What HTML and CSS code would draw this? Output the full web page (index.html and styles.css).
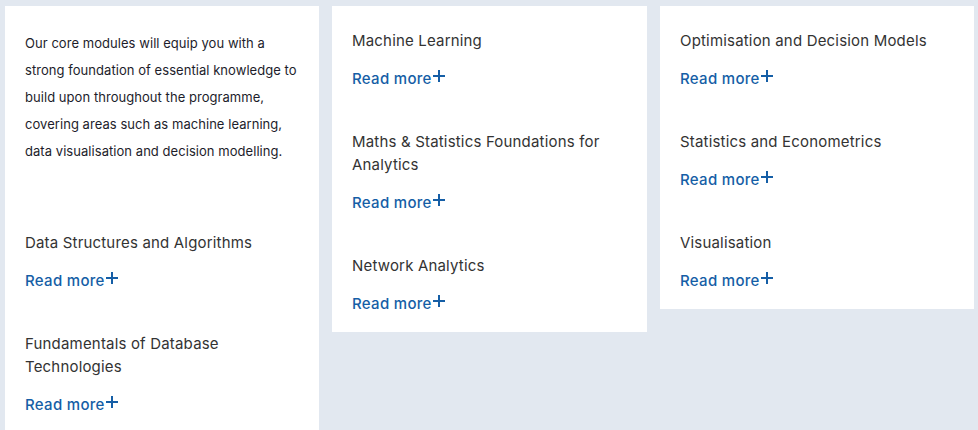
FILE: index.html
```html
<!DOCTYPE html>
<html lang="en">
<head>
<meta charset="utf-8">
<title>Core modules</title>
<link rel="stylesheet" href="styles.css">
</head>
<body>
<div class="grid">
  <div class="card">
    <p class="intro">Our core modules will equip you with a strong foundation of essential knowledge to build upon throughout the programme, covering areas such as machine learning, data visualisation and decision modelling.</p>
    <div class="item">
      <h3 class="title">Data Structures and Algorithms</h3>
      <a class="more" href="#">Read more<svg class="plus" viewBox="0 0 12 12" width="12" height="12"><path d="M6 0V12M0 6H12"/></svg></a>
    </div>
    <div class="item">
      <h3 class="title">Fundamentals of Database Technologies</h3>
      <a class="more" href="#">Read more<svg class="plus" viewBox="0 0 12 12" width="12" height="12"><path d="M6 0V12M0 6H12"/></svg></a>
    </div>
  </div>
  <div class="card">
    <div class="item">
      <h3 class="title">Machine Learning</h3>
      <a class="more" href="#">Read more<svg class="plus" viewBox="0 0 12 12" width="12" height="12"><path d="M6 0V12M0 6H12"/></svg></a>
    </div>
    <div class="item">
      <h3 class="title">Maths &amp; Statistics Foundations for Analytics</h3>
      <a class="more" href="#">Read more<svg class="plus" viewBox="0 0 12 12" width="12" height="12"><path d="M6 0V12M0 6H12"/></svg></a>
    </div>
    <div class="item">
      <h3 class="title">Network Analytics</h3>
      <a class="more" href="#">Read more<svg class="plus" viewBox="0 0 12 12" width="12" height="12"><path d="M6 0V12M0 6H12"/></svg></a>
    </div>
  </div>
  <div class="card">
    <div class="item">
      <h3 class="title">Optimisation and Decision Models</h3>
      <a class="more" href="#">Read more<svg class="plus" viewBox="0 0 12 12" width="12" height="12"><path d="M6 0V12M0 6H12"/></svg></a>
    </div>
    <div class="item">
      <h3 class="title">Statistics and Econometrics</h3>
      <a class="more" href="#">Read more<svg class="plus" viewBox="0 0 12 12" width="12" height="12"><path d="M6 0V12M0 6H12"/></svg></a>
    </div>
    <div class="item">
      <h3 class="title">Visualisation</h3>
      <a class="more" href="#">Read more<svg class="plus" viewBox="0 0 12 12" width="12" height="12"><path d="M6 0V12M0 6H12"/></svg></a>
    </div>
  </div>
</div>
</body>
</html>
```
FILE: styles.css
```css
html, body {
  margin: 0;
  padding: 0;
  background: #e2e8f0;
  font-family: Inter, "Liberation Sans", Arial, sans-serif;
  overflow: hidden;
}
.grid {
  display: grid;
  grid-template-columns: 314px 315px 314px;
  column-gap: 13px;
  align-items: start;
  padding: 6px 4px 0 5px;
}
.card {
  background: #fff;
  padding: 23px 20px 17px;
  display: flex;
  flex-direction: column;
  gap: 40px;
}
.card:first-child {
  min-height: 600px;
}
.intro {
  margin: 1px 0 26px;
  font-size: 13px;
  line-height: 27px;
  letter-spacing: 0.05px;
  color: #1d1d2b;
}
.item {
  display: flex;
  flex-direction: column;
  align-items: flex-start;
}
.title {
  margin: 0 0 14px;
  font-size: 15px;
  font-weight: 400;
  line-height: 23px;
  letter-spacing: 0.18px;
  color: #333;
}
.more {
  display: inline-flex;
  align-items: center;
  height: 24px;
  font-size: 15px;
  font-weight: 500;
  letter-spacing: 0.3px;
  color: #155ea6;
  text-decoration: none;
}
.plus {
  margin-left: 1px;
  margin-top: -4px;
  stroke: #155ea6;
  stroke-width: 2;
  fill: none;
}
```
